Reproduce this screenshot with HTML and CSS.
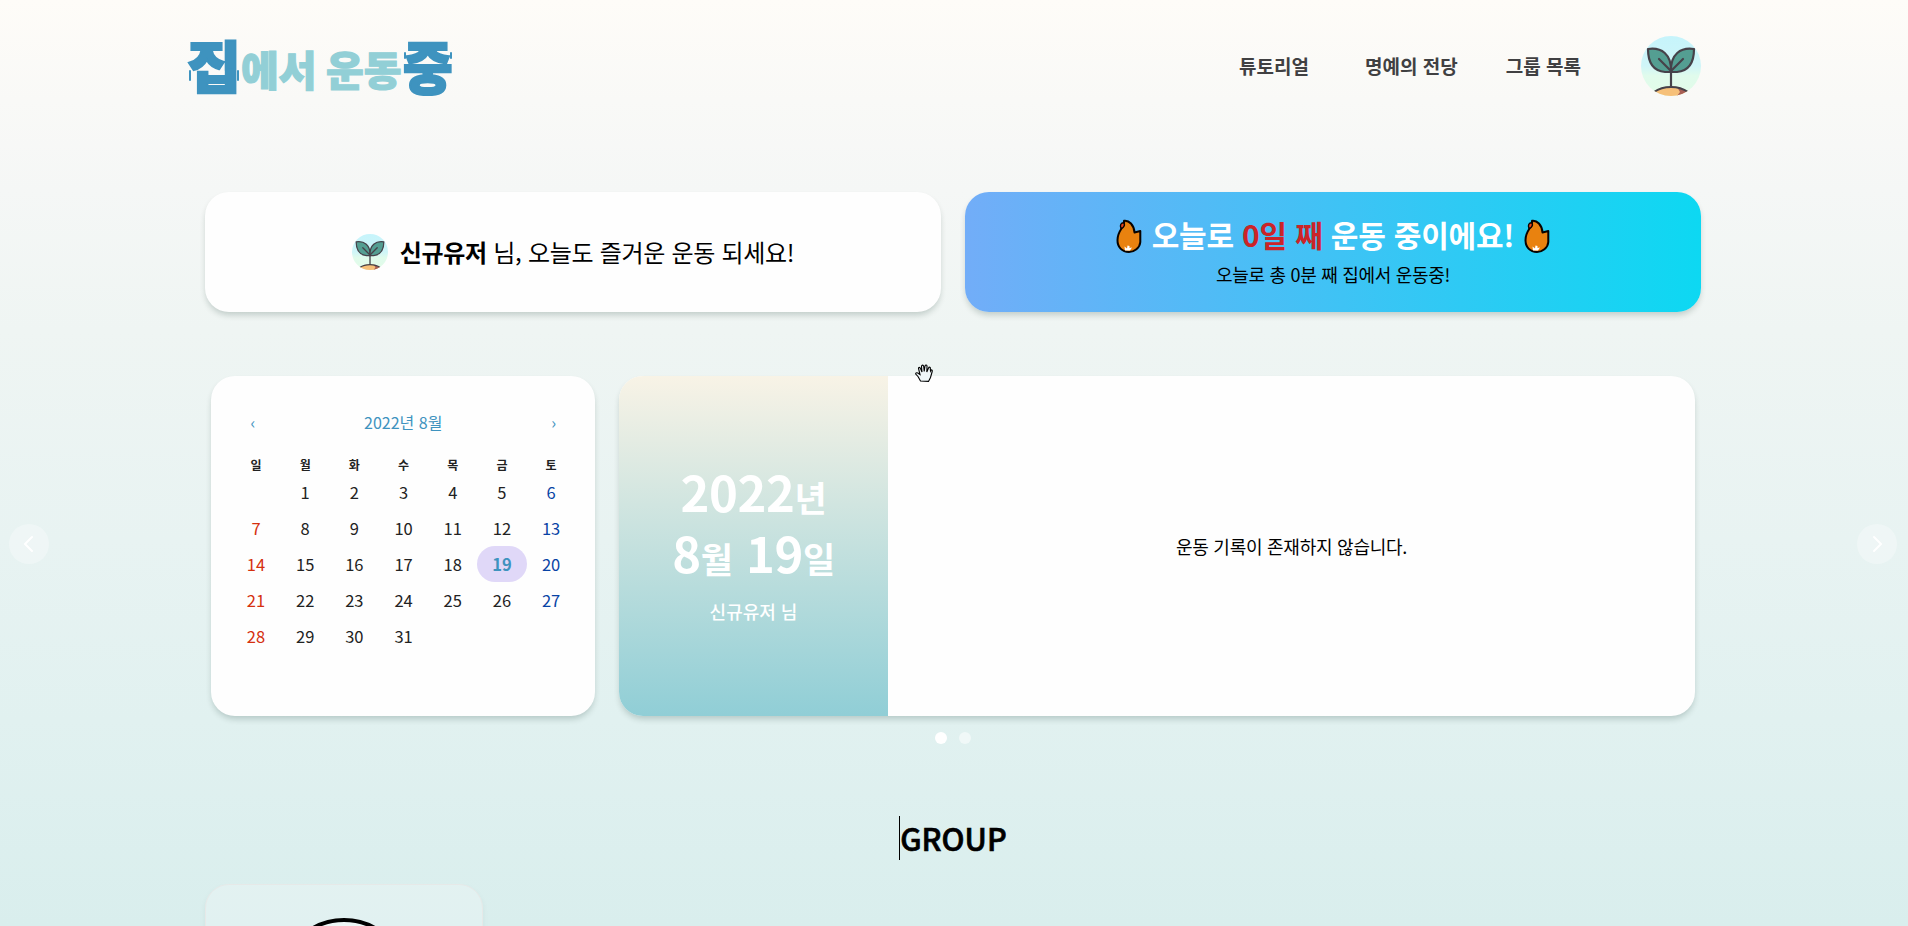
FILE: index.html
```html
<!DOCTYPE html>
<html lang="ko">
<head>
<meta charset="utf-8">
<title>집에서 운동중</title>
<link rel="stylesheet" href="styles.css">
</head>
<body>
<svg class="defs" width="0" height="0" aria-hidden="true">
  <defs>
    <linearGradient id="sky" x1="0" y1="0" x2="0" y2="1">
      <stop offset="0" stop-color="#c6f4fb"/><stop offset=".5" stop-color="#cff5f8"/><stop offset=".66" stop-color="#e0fbec"/><stop offset="1" stop-color="#e2fce8"/>
    </linearGradient>
    <clipPath id="disc"><circle cx="30" cy="30" r="30"/></clipPath>
  </defs>
  <symbol id="sprout" viewBox="0 0 60 60">
    <g clip-path="url(#disc)">
      <rect width="60" height="60" fill="url(#sky)"/>
      <ellipse cx="30" cy="62" rx="20" ry="11.500" fill="#f6c079"/>
      <path d="M36 51 Q44 53 50 60 H36 L39 56Z" fill="#a85f55"/>
      <path d="M13 56 Q20 51 30 51 T47 56" fill="none" stroke="#46424a" stroke-width="2"/>
    </g>
    <path d="M30 51V26" stroke="#46424a" stroke-width="2.200" fill="none"/>
    <g fill="#549e92" stroke="#46424a" stroke-width="2.200" stroke-linejoin="round" stroke-linecap="round">
      <path d="M30 36 H24 C13 35 7 27 7 13 C20 11 31 18 30 36Z"/>
      <path d="M30 36 H36 C47 35 53 27 53 13 C40 11 29 18 30 36Z"/>
      <path d="M18 23 L30 35 L42 23" fill="none"/>
    </g>
  </symbol>
  <symbol id="flame" viewBox="0 0 26 34">
    <path d="M8 1.800 C13 1 18 6 18.500 13.500 L24.300 12 L24.300 23 C24 29 18 33 13 33 C6 33 1.300 28 1.500 21 C1.500 16 3.500 12.500 5.500 9.500 C7.500 7 8.500 4.500 8 1.800Z" fill="#e9820f" stroke="#080300" stroke-width="2" stroke-linejoin="round"/>
    <path d="M5 9.500 C3.500 6 5 3.500 8 3.800 C9 6 8 9 5 9.500Z" fill="#e8451c" stroke="#080300" stroke-width="1.400"/>
    <path d="M9 31.500 L8.500 27.500 L11 29.500 L11.500 26.500 L13.500 27 L13.500 29 L16 28.500 L14 31.500Z" fill="#fff"/>
  </symbol>
</svg>

<header class="header">
  <a class="logo"><span class="big jip"><b>집</b></span><span class="small eseo">에서</span><span class="small undong">운동</span><span class="big jung"><b>중</b></span></a>
  <nav class="nav">
    <a>튜토리얼</a><a>명예의 전당</a><a>그룹 목록</a>
    <svg class="avatar"><use href="#sprout"/></svg>
  </nav>
</header>

<main class="main">
  <section class="banners">
    <div class="card welcome">
      <svg class="mini"><use href="#sprout"/></svg>
      <p><b>신규유저</b> 님, 오늘도 즐거운 운동 되세요!</p>
    </div>
    <div class="card streak">
      <div class="streak-line">
        <svg class="flame"><use href="#flame"/></svg>
        <h2>오늘로 <em>0일 째</em> 운동 중이에요!</h2>
        <svg class="flame"><use href="#flame"/></svg>
      </div>
      <p>오늘로 총 0분 째 집에서 운동중!</p>
    </div>
  </section>

  <section class="carousel">
    <button class="arrow prev"><svg viewBox="0 0 40 40"><path d="M23 13l-7 7 7 7"/></svg></button>
    <div class="slide">
      <div class="card calendar">
        <div class="cal-head"><span>‹</span><span>2022년 8월</span><span>›</span></div>
        <div class="week"><span>일</span><span>월</span><span>화</span><span>수</span><span>목</span><span>금</span><span>토</span></div>
        <div class="days">
          <i></i><i>1</i><i>2</i><i>3</i><i>4</i><i>5</i><i>6</i>
          <i>7</i><i>8</i><i>9</i><i>10</i><i>11</i><i>12</i><i>13</i>
          <i>14</i><i>15</i><i>16</i><i>17</i><i>18</i><i class="today">19</i><i>20</i>
          <i>21</i><i>22</i><i>23</i><i>24</i><i>25</i><i>26</i><i>27</i>
          <i>28</i><i>29</i><i>30</i><i>31</i>
        </div>
      </div>
      <div class="card record">
        <div class="date">
          <p class="ymd">2022<small>년</small><br>8<small>월</small> 19<small>일</small></p>
          <p class="who">신규유저 님</p>
        </div>
        <div class="empty">운동 기록이 존재하지 않습니다.</div>
      </div>
    </div>
    <button class="arrow next"><svg viewBox="0 0 40 40"><path d="M17 13l7 7-7 7"/></svg></button>
    <svg class="hand" viewBox="0 0 18 18"><path d="M5.500 17 L3 12.500 L.7 10 C.5 8.500 2.500 8.500 3.500 9.500 L5 10.500 L3.500 4.500 C3.500 3 5 3 5.500 4.500 L7 8 L6.500 2.500 C6.500 .7 8.500 .7 8.700 2.500 L9.200 7.500 L10 2 C10.300 .5 12.200 .8 12 2.500 L11.800 8 L13.500 4 C14.200 2.500 15.700 3.200 15.300 4.500 L15.500 7 C16.500 5 17.500 6 17.200 7.500 L15.500 13.500 L13.500 17.400Z"/></svg>
  </section>
  <div class="dots"><span class="on"></span><span></span></div>

  <h2 class="group-title">GROUP</h2>
  <section class="groups">
    <div class="group-card"><div class="ring"></div></div>
  </section>
</main>
</body>
</html>
```

FILE: styles.css
```css
* { box-sizing: border-box; margin: 0; padding: 0; }
html, body { height: 926px; overflow: hidden; }
body {
  font-family: "Noto Sans CJK KR", "Noto Sans", sans-serif;
  color: #000;
  background: linear-gradient(180deg, #fefcf8 0, #f9f9f7 100px, #f5f7f6 190px, #eff5f3 330px, #e8f3f2 540px, #e1f1f0 720px, #d9eeed 926px);
}
.defs { position: absolute; }
.header {
  height: 132px;
  padding: 0 207px 0 187px;
  display: flex;
  justify-content: space-between;
  align-items: center;
}
.logo { display: flex; align-items: center; font-weight: 900; line-height: 60px; height: 60px; white-space: nowrap; stroke-linejoin: round; }
.big { position: relative; font-size: 55px; color: #3e93bf; -webkit-text-stroke: 2px #3e93bf; }
.big b { display: inline-block; font-weight: 900; transform-origin: 0 50%; }
.jip b { transform: translateY(-2px) scale(1.07, 1.02); }
.jung b { transform: translate(1px, -2px) scale(.98, 1.04); }
.big::before, .big::after { content: ""; position: absolute; width: 2px; height: 11px; border-radius: 1px; background: #3e93bf; }
.jip::before { left: 2px; top: 34px; }
.jip::after { left: 50px; top: 34px; }
.jung::before { left: 2px; top: 16px; height: 7px; }
.jung::after { left: 48px; top: 16px; height: 7px; }
.small { font-size: 41px; color: #92cfd6; -webkit-text-stroke: 1.200px #92cfd6; padding-top: 4px; }
.jip { width: 54px; }
.eseo { width: 85px; }
.undong { width: 76px; }
.jung { width: 52px; }
.nav { display: flex; align-items: center; font-size: 19px; font-weight: 700; color: #404042; }
.nav a { padding-bottom: 1px; }
.nav a:nth-child(2) { margin-left: 56px; }
.nav a:nth-child(3) { margin-left: 48px; }
.avatar { width: 60px; height: 60px; margin-left: 60px; }

.main { width: 1496px; margin: 60px auto 0; position: relative; left: -1px; }
.banners { display: grid; grid-template-columns: 1fr 1fr; gap: 24px; }
.card { background: #fefefe; border-radius: 24px; box-shadow: 0 4px 6px -1px rgba(0, 40, 30, .2); }
.banners .card { height: 120px; }
.welcome { display: flex; align-items: center; justify-content: center; font-size: 24px; letter-spacing: -.3px; }
.welcome p { padding-bottom: 2px; }
.mini { width: 36px; height: 36px; margin-right: 12px; }
.streak { background: linear-gradient(90deg, #72adf8, #0dd8f2); display: flex; flex-direction: column; align-items: center; padding-top: 22px; }
.streak-line { display: flex; align-items: center; height: 44px; gap: 10px; }
.streak h2 { font-size: 30px; line-height: 44px; color: #fff; font-weight: 700; letter-spacing: -.2px; padding-bottom: 4px; }
.streak em { font-style: normal; color: #cb2428; }
.streak p { font-size: 18px; line-height: 28px; margin-top: 2px; letter-spacing: -.3px; }
.flame { width: 26px; height: 34px; }

.carousel { margin-top: 64px; position: relative; }
.slide { display: grid; grid-template-columns: 384px 1076px; gap: 24px; padding: 0 6px; }
.slide .card { height: 340px; }
.arrow { position: absolute; top: 148px; width: 40px; height: 40px; border: 0; border-radius: 50%; background: rgba(255, 255, 255, .3); }
.arrow svg { display: block; width: 40px; height: 40px; fill: none; stroke: #fff; stroke-width: 2; stroke-linecap: round; }
.prev { left: -196px; }
.next { right: -196px; }
.hand { position: absolute; left: 710px; top: -12px; width: 18px; height: 18px; fill: #eff6f9; stroke: #000; stroke-width: 1.100; }

.calendar { padding: 24px 20px 24px 20.400px; }
.cal-head { display: flex; justify-content: space-between; padding: 0 19px; height: 44px; line-height: 44px; font-size: 16px; color: #3e93bf; }
.week, .days { display: grid; grid-template-columns: repeat(7, 49.200px); text-align: center; }
.week { font-size: 12px; font-weight: 700; line-height: 18px; margin-top: 12px; color: #222; }
.days { grid-auto-rows: 36px; line-height: 36px; font-size: 16.500px; color: #222; }
.days i { font-style: normal; }
.days i:nth-child(7n) { color: #0843a5; }
.days i:nth-child(7n+1) { color: #d5300e; }
.days .today { background: #e0d8f8; color: #3e93bf; border-radius: 18px; font-weight: 700; }

.record { display: flex; overflow: hidden; }
.date { width: 269px; background: linear-gradient(180deg, #f8f3e6, #90ced6); display: flex; flex-direction: column; align-items: center; justify-content: center; padding-bottom: 8px; color: #fff; text-align: center; }
.ymd { font-size: 49px; font-weight: 700; line-height: 61px; letter-spacing: -.4px; }
.ymd small { font-size: 35px; line-height: 1; }
.who { font-size: 18px; font-weight: 500; line-height: 26px; margin-top: 16px; }
.empty { flex: 1; display: flex; align-items: center; justify-content: center; font-size: 18px; letter-spacing: -.25px; }

.dots { display: flex; justify-content: center; gap: 12px; margin-top: 16px; }
.dots span { width: 12px; height: 12px; border-radius: 50%; background: rgba(255, 255, 255, .5); }
.dots .on { background: #fff; }

.group-title { width: max-content; margin: 72px auto 0; font-size: 30.500px; line-height: 44px; font-weight: 500; -webkit-text-stroke: .7px #000; border-left: 1px solid #000; }
.groups { margin-top: 24px; height: 42px; overflow: hidden; margin-inline: -10px; padding: 0 10px; }
.group-card { width: 278px; height: 300px; border-radius: 24px; background: rgba(255, 255, 255, .22); border: 1px solid #e6e9e8; box-shadow: 0 3px 6px rgba(0, 40, 30, .05); padding-top: 33px; }
.ring { width: 128px; height: 128px; margin: 0 auto; border: 4px solid #000; border-radius: 50%; background: #eef7f7; }
```
